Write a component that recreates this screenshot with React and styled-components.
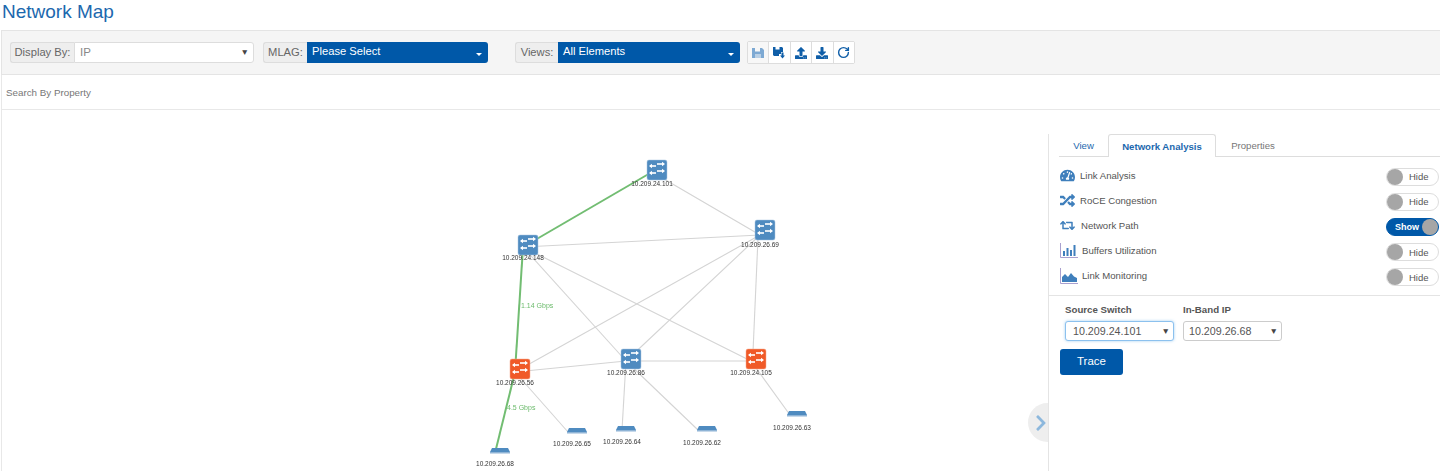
import React from "react";
import styled, { createGlobalStyle } from "styled-components";
import { FaTachometerAlt, FaRandom, FaRetweet, FaUpload, FaDownload, FaChevronRight } from "react-icons/fa";
import { RotateCw } from "lucide-react";

const GlobalStyle = createGlobalStyle`
    html, body {
        margin : 0;
        padding : 0;
        background : #fff;
        font-family : "Liberation Sans", Arial, sans-serif;
    }
`

const Page = styled.div`
    width : 1440px;
    height : 471px;
    overflow : hidden;
    display : flex;
    flex-direction : column;
`

const Title = styled.h1`
    margin : 0;
    padding : 0 0 0 2px;
    height : 30px;
    line-height : 24px;
    font-size : 19px;
    font-weight : 400;
    color : #1c68ae;
`

const Toolbar = styled.div`
    height : 45px;
    margin-left : 1px;
    box-sizing : border-box;
    padding-left : 8px;
    display : flex;
    align-items : center;
    background : #f5f5f5;
    border-top : 1px solid #e4e4e4;
    border-left : 1px solid #e4e4e4;
    border-bottom : 1px solid #e4e4e4;
`

const Group = styled.div`
    display : flex;
    height : 21px;
    width : ${props=>props.$width}px;
    margin-right : ${props=>props.$gap}px;
`

const Addon = styled.span`
    box-sizing : border-box;
    width : ${props=>props.$width}px;
    display : flex;
    align-items : center;
    justify-content : center;
    padding-bottom : 2px;
    font-size : 11.2px;
    color : #666;
    background : #eee;
    border : 1px solid #ddd;
    border-right : 0;
    border-radius : 3px 0 0 3px;
`

const PlainSelect = styled.div`
    flex : 1;
    box-sizing : border-box;
    display : flex;
    align-items : center;
    justify-content : space-between;
    padding : 0 4px 1px 5px;
    font-size : 11.5px;
    color : #888;
    background : #fff;
    border : 1px solid #ddd;
    border-radius : 0 3px 3px 0;
`

const BlueSelect = styled.div`
    flex : 1;
    display : flex;
    align-items : center;
    justify-content : space-between;
    padding : 0 6px 3px 5px;
    font-size : 11.2px;
    color : #fff;
    background : #0058a8;
    border-radius : 0 3px 3px 0;
`

const Caret = styled.span`
    width : 0;
    height : 0;
    margin-top : 6px;
    border-left : 3px solid transparent;
    border-right : 3px solid transparent;
    border-top : 3px solid #fff;
`

const Arrow = styled.span`
    font-size : 8.5px;
    color : #444;
`

const IconBar = styled.div`
    display : flex;
    height : 21px;
    border : 1px solid #ddd;
    border-radius : 2px;
    margin-left : -1px;
`

const IconButton = styled.span`
    width : 20.4px;
    display : flex;
    align-items : center;
    justify-content : center;
    background : ${props=>props.$disabled ? "#f7f7f7" : "#fff"};
    color : ${props=>props.$disabled ? "#7da9d3" : "#0f5ea8"};
    font-size : 12px;
    & + & {
        border-left : 1px solid #ddd;
    }
`

const SearchRow = styled.div`
    height : 35px;
    margin-left : 1px;
    box-sizing : border-box;
    padding : 1px 0 0 4px;
    display : flex;
    align-items : center;
    font-size : 9.8px;
    color : #777;
    border-left : 1px solid #e8e8e8;
    border-bottom : 1px solid #e8e8e8;
`

const Main = styled.div`
    flex : 1;
    display : flex;
    margin-left : 1px;
    border-left : 1px solid #e8e8e8;
`

const Canvas = styled.div`
    flex : 1;
    position : relative;
`

const Graph = styled.svg`
    display : block;
    width : 100%;
    height : 100%;
    filter : blur(0.45px);
`

const NodeLabel = styled.text`
    font-family : "Liberation Sans", Arial, sans-serif;
    font-size : 6.5px;
    fill : #333;
    text-anchor : middle;
`

const SpeedLabel = styled.text`
    font-family : "Liberation Sans", Arial, sans-serif;
    font-size : 7px;
    fill : #6cbb6c;
`

const Handle = styled.div`
    position : absolute;
    right : 0;
    top : 293px;
    width : 20px;
    height : 39px;
    display : flex;
    align-items : center;
    justify-content : flex-end;
    box-sizing : border-box;
    background : #eee;
    border-radius : 20px 0 0 20px;
    color : #8db8dd;
    font-size : 18px;
    svg {
        margin-right : -2px;
    }
`

const Panel = styled.aside`
    width : 392px;
    margin-top : 24px;
    box-sizing : border-box;
    border-left : 1px solid #e4e4e4;
`

const Tabs = styled.div`
    height : 22px;
    margin-left : 10px;
    display : flex;
    border-bottom : 1px solid #ddd;
    box-sizing : content-box;
`

const Tab = styled.span`
    box-sizing : border-box;
    height : ${props=>props.$active ? "23px" : "22px"};
    width : ${props=>props.$width}px;
    display : flex;
    align-items : center;
    justify-content : center;
    font-size : 9.6px;
    font-weight : ${props=>props.$active ? 700 : 400};
    color : ${props=>props.$muted ? "#777" : "#1c68ae"};
    background : #fff;
    border : 1px solid ${props=>props.$active ? "#ddd" : "transparent"};
    border-bottom : 0;
    border-radius : 3px 3px 0 0;
`

const Rows = styled.div`
    padding : 7px 1px 5px 11px;
    border-bottom : 1px solid #e4e4e4;
`

const Row = styled.div`
    height : 25.2px;
    display : flex;
    align-items : center;
    justify-content : space-between;
`

const RowName = styled.div`
    display : flex;
    align-items : center;
    font-size : 9.6px;
    color : #555;
    padding-bottom : 3px;
`

const RowIcon = styled.span`
    width : ${props=>props.$width || 20}px;
    display : flex;
    align-items : center;
    color : #3f7fbc;
    font-size : 15px;
`

const Toggle = styled.div`
    position : relative;
    box-sizing : border-box;
    width : 53px;
    height : 18px;
    border-radius : 9px;
    display : flex;
    align-items : center;
    font-size : ${props=>props.$on ? "9px" : "9.5px"};
    color : ${props=>props.$on ? "#fff" : "#555"};
    font-weight : ${props=>props.$on ? 700 : 400};
    background : ${props=>props.$on ? "#0058a8" : "#fff"};
    border : 1px solid ${props=>props.$on ? "#0058a8" : "#ddd"};
    padding-left : ${props=>props.$on ? "8px" : "22px"};
    &::after {
        content : "";
        position : absolute;
        top : 0;
        ${props=>props.$on ? "right : 0;" : "left : 0;"}
        width : 16px;
        height : 16px;
        border-radius : 50%;
        background : #a6a6a6;
    }
`

const TraceForm = styled.div`
    padding : 7px 0 0 11px;
`

const Fields = styled.div`
    display : flex;
    gap : 9px;
    padding-left : 5px;
`

const Field = styled.div`
    width : ${props=>props.$width}px;
`

const FieldLabel = styled.label`
    display : block;
    height : 18px;
    line-height : 13px;
    font-size : 9.7px;
    font-weight : 700;
    color : #555;
`

const FieldSelect = styled.div`
    box-sizing : border-box;
    height : 20px;
    display : flex;
    align-items : center;
    justify-content : space-between;
    padding : 0 3px 0 ${props=>props.$focused ? "7px" : "5px"};
    font-size : 10.7px;
    color : #555;
    background : #fff;
    border : 1px solid ${props=>props.$focused ? "#8cc1ee" : "#ccc"};
    border-radius : 3px;
    box-shadow : ${props=>props.$focused ? "0 0 3px rgba(102,175,233,.6)" : "none"};
`

const TraceButton = styled.button`
    display : block;
    width : 63px;
    height : 26px;
    margin-top : 8px;
    padding : 0 0 1px;
    font : 400 11.5px "Liberation Sans", Arial, sans-serif;
    color : #fff;
    background : #0058a8;
    border : 0;
    border-radius : 3px;
`

const SaveIcon = () => (
    <svg width="12" height="12" viewBox="0 0 12 12" fill="currentColor">
        <path d="M0 1h10l2 2v8H0z" />
        <rect x="3" y="1" width="5" height="3.500" fill="#f7f7f7" />
        <rect x="3" y="7" width="6" height="4" fill="#f7f7f7" opacity="0.5" />
    </svg>
)

const SaveDownIcon = () => (
    <svg width="13" height="13" viewBox="0 0 13 13" fill="currentColor">
        <path d="M0 1h9l1 1v4H8v2H6v2H1L0 9z" />
        <path d="M8.5 6.5h2v3H12L9.5 12.5 7 9.5h1.5z" />
        <rect x="2.5" y="1" width="4" height="2.5" fill="#fff" />
    </svg>
)

const BarsIcon = () => (
    <svg width="18" height="15" viewBox="0 0 18 15">
        <path d="M.5 0v14.5H18" fill="none" stroke="#a9a0cf" strokeWidth="1" />
        <path d="M3 8h2v5H3zM6.500 5h2v8h-2zM10 7h2v6h-2zM13.500 2h2v11h-2z" fill="#3f7fbc" />
    </svg>
)

const AreaIcon = () => (
    <svg width="18" height="16" viewBox="0 0 18 16">
        <path d="M.5 0v15.500H18" fill="none" stroke="#a9a0cf" strokeWidth="1" />
        <path d="M2 14V9l3-3 3 3 3-4 3 3.500 3 1.500v4z" fill="#3f7fbc" />
    </svg>
)

const anchors = {
    a : [652, 172], b : [523, 247], c : [760, 235], d : [515, 372], e : [626, 361], f : [751, 361],
    g : [568, 432], h : [622, 430], i : [698, 430], j : [790, 415], k : [495.5, 451],
}

const links = ["ac", "bc", "be", "bf", "dc", "ec", "de", "ef", "dg", "eh", "ei", "fj"]
const greenLinks = ["ab", "bd", "dk"]

const switches = [
    {x : 657, y : 170, ip : "10.209.24.101", labelX : 652, labelY : 185.5},
    {x : 528, y : 245, ip : "10.209.24.148", labelX : 523, labelY : 259.5},
    {x : 765, y : 230, ip : "10.209.26.69", labelX : 760, labelY : 246.5},
    {x : 520, y : 369, ip : "10.209.26.56", orange : true, labelX : 515, labelY : 384.5},
    {x : 631, y : 359, ip : "10.209.26.86", labelX : 626, labelY : 374.5},
    {x : 756, y : 359, ip : "10.209.24.105", orange : true, labelX : 751, labelY : 374.5},
]

const hosts = [
    {x : 577, y : 430, ip : "10.209.26.65", labelX : 572, labelY : 445.5},
    {x : 626, y : 428, ip : "10.209.26.64", labelX : 622, labelY : 443.5},
    {x : 707, y : 428, ip : "10.209.26.62", labelX : 702, labelY : 444.5},
    {x : 797, y : 413, ip : "10.209.26.63", labelX : 792, labelY : 429.5},
    {x : 500, y : 450, ip : "10.209.26.68", labelX : 495, labelY : 465.5},
]

const rows = [
    {name : "Link Analysis", icon : <FaTachometerAlt />},
    {name : "RoCE Congestion", icon : <FaRandom />},
    {name : "Network Path", icon : <FaRetweet />, on : true, width : 21},
    {name : "Buffers Utilization", icon : <BarsIcon />, width : 22},
    {name : "Link Monitoring", icon : <AreaIcon />, width : 22},
]

// the graph is offset by the page's left edge and the top of the main area
const GRAPH_TOP = 110
const GRAPH_LEFT = 2

const SwitchNode = ({x, y, ip, orange, labelX, labelY}) => (
    <g>
        <rect x={x - 10} y={y - 10} width="20" height="20" rx="2" fill={orange ? "#f05a28" : "#4f8bc0"} stroke={orange ? "#f7a98c" : "#a9c6e0"} strokeWidth="0.5" />
        <g stroke="#fff" strokeWidth="1.6" fill="#fff">
            <path d={`M${x} ${y - 6}h6`} />
            <path d={`M${x + 8} ${y - 6}l-3 -2.2v4.4z`} strokeWidth="0" />
            <path d={`M${x - 7} ${y - 4}h6`} />
            <path d={`M${x - 8} ${y - 4}l3 -2.2v4.400z`} strokeWidth="0" />
            <path d={`M${x} ${y + 1}h6`} />
            <path d={`M${x + 8} ${y + 1}l-3 -2.2v4.4z`} strokeWidth="0" />
            <path d={`M${x - 7} ${y + 3}h6`} />
            <path d={`M${x - 8} ${y + 3}l3 -2.2v4.4z`} strokeWidth="0" />
        </g>
        <NodeLabel x={labelX} y={labelY}>{ip}</NodeLabel>
    </g>
)

const HostNode = ({x, y, ip, labelX, labelY}) => (
    <g>
        <path d={`M${x - 8} ${y - 2}h16l2 4h-20z`} fill="#4f8bc0" />
        <rect x={x - 10} y={y + 2} width="20" height="1.500" fill="#8fb4d6" />
        <NodeLabel x={labelX} y={labelY}>{ip}</NodeLabel>
    </g>
)

const Link = ({pair, color, width}) => {
    const [x1, y1] = anchors[pair[0]]
    const [x2, y2] = anchors[pair[1]]
    return <line x1={x1} y1={y1} x2={x2} y2={y2} stroke={color} strokeWidth={width} />
}

const NetworkGraph = () => (
    <Graph viewBox={`${GRAPH_LEFT} ${GRAPH_TOP} 1046 361`}>
        {links.map(p => <Link key={p} pair={p} color="#d4d4d4" width="1.1" />)}
        {/* this one does not run through the anchors */}
        <line x1="758" y1="238" x2="753" y2="352" stroke="#d4d4d4" strokeWidth="1.1" />
        {greenLinks.map(p => <Link key={p} pair={p} color="#72bd72" width="2" />)}
        <SpeedLabel x="521" y="307.5">1.14 Gbps</SpeedLabel>
        <SpeedLabel x="507" y="410">4.5 Gbps</SpeedLabel>
        {hosts.map(h => <HostNode key={h.ip} {...h} />)}
        {switches.map(s => <SwitchNode key={s.ip} {...s} />)}
    </Graph>
)

const App = () => {
    return(
        <>
        <GlobalStyle />
        <Page>
            <Title>Network Map</Title>
            <Toolbar>
                <Group $width={244} $gap={9}>
                    <Addon $width={64}>Display By:</Addon>
                    <PlainSelect>IP <Arrow>▼</Arrow></PlainSelect>
                </Group>
                <Group $width={225} $gap={27}>
                    <Addon $width={44}>MLAG:</Addon>
                    <BlueSelect>Please Select <Caret /></BlueSelect>
                </Group>
                <Group $width={225} $gap={8}>
                    <Addon $width={43}>Views:</Addon>
                    <BlueSelect>All Elements <Caret /></BlueSelect>
                </Group>
                <IconBar>
                    <IconButton $disabled><SaveIcon /></IconButton>
                    <IconButton><SaveDownIcon /></IconButton>
                    <IconButton><FaUpload /></IconButton>
                    <IconButton><FaDownload /></IconButton>
                    <IconButton><RotateCw size={13} strokeWidth={2.6} /></IconButton>
                </IconBar>
            </Toolbar>
            <SearchRow>Search By Property</SearchRow>
            <Main>
                <Canvas>
                    <NetworkGraph />
                    <Handle><FaChevronRight /></Handle>
                </Canvas>
                <Panel>
                    <Tabs>
                        <Tab $width={49}>View</Tab>
                        <Tab $width={108} $active>Network Analysis</Tab>
                        <Tab $width={74} $muted>Properties</Tab>
                    </Tabs>
                    <Rows>
                        {rows.map(r => (
                            <Row key={r.name}>
                                <RowName>
                                    <RowIcon $width={r.width}>{r.icon}</RowIcon>
                                    {r.name}
                                </RowName>
                                <Toggle $on={r.on}>{r.on ? "Show" : "Hide"}</Toggle>
                            </Row>
                        ))}
                    </Rows>
                    <TraceForm>
                        <Fields>
                            <Field $width={109}>
                                <FieldLabel>Source Switch</FieldLabel>
                                <FieldSelect $focused>10.209.24.101 <Arrow>▼</Arrow></FieldSelect>
                            </Field>
                            <Field $width={99}>
                                <FieldLabel>In-Band IP</FieldLabel>
                                <FieldSelect>10.209.26.68 <Arrow>▼</Arrow></FieldSelect>
                            </Field>
                        </Fields>
                        <TraceButton>Trace</TraceButton>
                    </TraceForm>
                </Panel>
            </Main>
        </Page>
        </>
    )
}

export default App;
